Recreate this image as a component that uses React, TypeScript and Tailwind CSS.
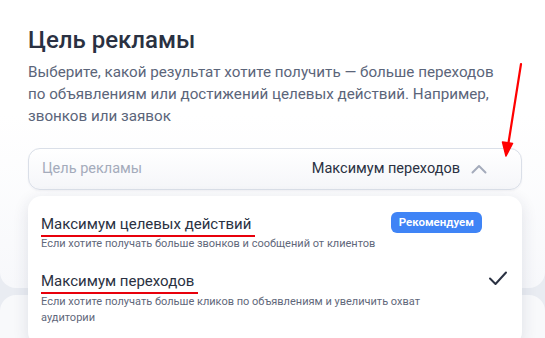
import React from 'react';

const font = { fontFamily: 'Roboto, "Noto Sans", sans-serif' };

export default function App() {
  return (
    <div className="relative w-[545px] h-[338px] overflow-hidden bg-[#e9ecf2]" style={font}>
      {/* Main card */}
      <div className="h-[288px] bg-gradient-to-b from-white from-40% to-[#f7f8fb] rounded-b-2xl px-[28px] pt-[25px]">
        <h1 className="text-[24px] leading-[30px] font-medium text-[#2a3142]">Цель рекламы</h1>
        <p className="mt-[6px] w-[470px] text-[15.2px] leading-[22px] text-[#5b657a]">
          Выберите, какой результат хотите получить — больше переходов по объявлениям или достижений целевых действий. Например, звонков или заявок
        </p>

        <div className="mt-[21px] h-[42px] w-[494px] rounded-[12px] border border-[#dadfe8] bg-gradient-to-b from-white to-[#f5f6f9] flex items-center pl-[13px] pr-[34px] shadow-[0_1px_2px_rgba(30,40,70,0.05)]">
          <span className="text-[14.5px] text-[#a4abbb]">Цель рекламы</span>
          <span className="ml-auto text-[14.5px] text-[#2a3142]">Максимум переходов</span>
          <svg className="ml-[11px]" width="16" height="10" viewBox="0 0 16 10" fill="none">
            <path d="M1.5 8.5 L8 2 L14.5 8.5" stroke="#a4abbb" strokeWidth="2" strokeLinecap="round" strokeLinejoin="round" />
          </svg>
        </div>
      </div>
      <div className="mt-[7px] h-[60px] bg-[#f8f9fb] rounded-t-2xl" />

      {/* Dropdown menu */}
      <div className="absolute left-[28px] top-[196px] w-[494px] h-[150px] bg-white rounded-[14px] shadow-[0_4px_16px_rgba(30,40,70,0.12)] pl-[13px] pr-[14px] pt-[16px]">
        <div className="flex items-start">
          <div>
            <div className="relative inline-block text-[15px] leading-[21px] text-[#2a3142]">
              Максимум целевых действий
              <span className="absolute left-0 -right-[4px] top-[21px] h-[2px] bg-[#e8000b]" />
            </div>
            <div className="mt-[1px] text-[11px] leading-[14px] text-[#5f687b]">Если хотите получать больше звонков и сообщений от клиентов</div>
          </div>
          <span className="ml-auto mr-[26px] mt-[0px] h-[21px] px-[8px] rounded-[6px] bg-[#3f84f6] text-white text-[11.5px] font-semibold leading-[21px]">Рекомендуем</span>
        </div>

        <div className="mt-[18px] flex items-start">
          <div>
            <div className="relative inline-block text-[15px] leading-[21px] text-[#2a3142]">
              Максимум переходов
              <span className="absolute left-0 -right-[4px] top-[21px] h-[2px] bg-[#e8000b]" />
            </div>
            <div className="mt-[1px] w-[400px] text-[11px] leading-[16px] text-[#5f687b]">Если хотите получать больше кликов по объявлениям и увеличить охват аудитории</div>
          </div>
          <svg className="ml-auto mt-[1px]" width="20" height="16" viewBox="0 0 20 16" fill="none">
            <path d="M2 8.5 L7.5 14 L18 2.5" stroke="#2a3142" strokeWidth="2" strokeLinecap="round" strokeLinejoin="round" />
          </svg>
        </div>
      </div>

      {/* Annotation arrow */}
      <svg className="absolute left-0 top-0 pointer-events-none" width="545" height="338" viewBox="0 0 545 338" fill="none">
        <path d="M521 64 L508 146" stroke="#f00" strokeWidth="2.2" strokeLinecap="round" />
        <path d="M502.5 142 L506 156 L512.5 143.5 Z" fill="#f00" stroke="#f00" strokeWidth="1.5" strokeLinejoin="round" />
      </svg>
    </div>
  );
}
